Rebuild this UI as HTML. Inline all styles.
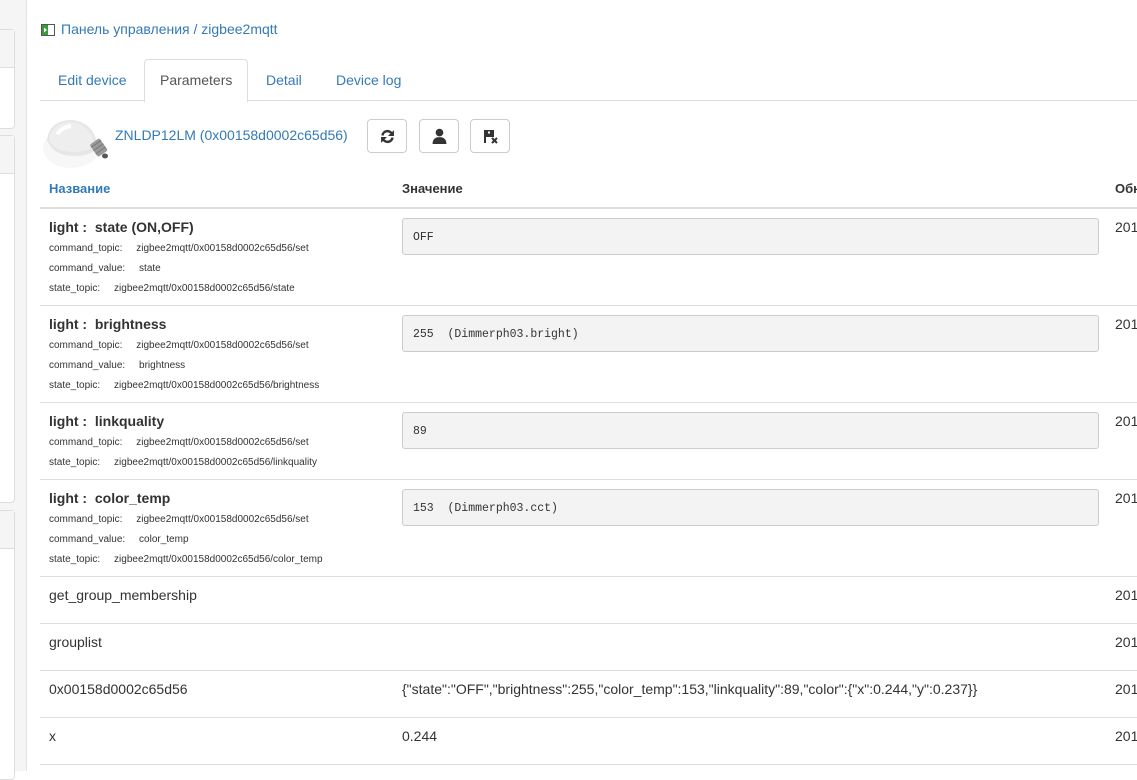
<!DOCTYPE html>
<html><head><meta charset="utf-8"><style>
*{box-sizing:border-box;margin:0;padding:0}
body{width:1137px;height:771px;overflow:hidden;background:#fff;font-family:"Liberation Sans",Arial,sans-serif;color:#333;position:relative;font-size:14px}
.a{position:absolute;white-space:nowrap}
.side{position:absolute;left:0;top:0;width:27px;height:771px;background:#f5f5f5;border-right:1px solid #e3e3e3}
.pan{position:absolute;left:-5px;width:20px;background:#fff;border:1px solid #ddd;border-radius:4px}
.ph{position:absolute;left:0;right:0;top:0;background:#f5f5f5;border-bottom:1px solid #ddd}
.hl{position:absolute;left:40px;right:0;height:1px;background:#ddd}
.inp{position:absolute;left:402px;width:697px;height:37px;background:#f3f3f3;border:1px solid #ccc;border-radius:3px;font-family:"Liberation Mono",monospace;font-size:11.5px;padding:12px 10px;white-space:pre;color:#333}
.t{font-weight:bold;font-size:14px;color:#333;left:49px}
.s{font-size:10px;color:#333;left:49px}
.y{left:1115px;font-size:14px}
.btn{position:absolute;top:119px;width:40px;height:34px;border:1px solid #ccc;border-radius:4px;background:#fff}
.tab{position:absolute;top:68px;font-size:14px;color:#337ab7}
</style></head><body>
<div class="side">
 <div class="pan" style="top:29px;height:100px"><div class="ph" style="height:38px"></div></div>
 <div class="pan" style="top:135px;height:368px"><div class="ph" style="height:38px"></div></div>
 <div class="pan" style="top:510px;height:270px"><div class="ph" style="height:38px"></div></div>
</div>
<svg class="a" style="left:41px;top:24px" width="14" height="12" viewBox="0 0 14 12"><rect x="0.5" y="0.5" width="13" height="11" fill="#fff" stroke="#555"/><rect x="1" y="1" width="6" height="10" fill="#3a9a3a"/><path d="M6 6L3 3.5V8.5Z" fill="#fff"/></svg>
<div class="a" style="left:61px;top:21px;font-size:14px;color:#337ab7">Панель управления / zigbee2mqtt</div>
<div class="hl" style="top:100px"></div>
<div class="a" style="left:144px;top:59px;width:104px;height:43px;background:#fff;border:1px solid #ddd;border-bottom:none;border-radius:4px 4px 0 0"></div>
<div class="tab" style="left:58px;top:72px">Edit device</div>
<div class="tab" style="left:160px;top:72px;color:#555">Parameters</div>
<div class="tab" style="left:266px;top:72px">Detail</div>
<div class="tab" style="left:336px;top:72px">Device log</div>
<svg class="a" style="left:41px;top:114px" width="70" height="58" viewBox="0 0 70 58"><ellipse cx="30" cy="34" rx="28" ry="20" fill="#f7f7f7"/><path d="M6 26 Q8 8 28 6 Q44 6 52 18 L58 32 Q50 42 34 42 Q12 42 6 26Z" fill="#e6e6e6"/><path d="M8 26 Q10 10 28 8 Q42 8 50 20 L54 32 Q46 38 32 38 Q14 38 8 26Z" fill="#eeeeee"/><path d="M16 20 Q22 13 30 12" stroke="#fff" stroke-width="4" fill="none"/><g transform="rotate(-35 58 34)"><rect x="52" y="26" width="12" height="15" rx="2" fill="#9a9a9a"/><path d="M52 29H64M52 33H64M52 37H64" stroke="#777" stroke-width="1"/></g><ellipse cx="64" cy="42" rx="3" ry="2.5" fill="#555"/></svg>
<div class="a" style="left:115px;top:127px;font-size:14px;color:#337ab7">ZNLDP12LM (0x00158d0002c65d56)</div>
<div class="btn" style="left:367px"><svg style="position:absolute;left:12px;top:9px" width="15" height="15" viewBox="0 0 14 14"><path d="M2.3 6A4.7 4.7 0 0 1 11 4.3M11.7 8A4.7 4.7 0 0 1 3 9.7" stroke="#333" stroke-width="2.3" fill="none"/><path d="M13 1V6.5H7.5Z M1 13V7.5H6.5Z" fill="#333"/></svg></div>
<div class="btn" style="left:419px"><svg style="position:absolute;left:12px;top:8px" width="15" height="16" viewBox="0 0 14 15"><circle cx="7" cy="4.3" r="3.6" fill="#333"/><path d="M0.5 15Q0.5 8.5 7 8.5Q13.5 8.5 13.5 15Z" fill="#333"/></svg></div>
<div class="btn" style="left:470px"><svg style="position:absolute;left:12px;top:9px" width="16" height="15" viewBox="0 0 16 15"><path d="M1 1H3V14H1Z M3 1H11V8H3Z" fill="#333"/><rect x="5" y="2.5" width="2" height="2" fill="#fff"/><path d="M9 9L14 14M14 9L9 14" stroke="#333" stroke-width="2"/></svg></div>
<div class="a" style="left:49px;top:181px;font-size:13px;font-weight:bold;color:#337ab7">Название</div>
<div class="a" style="left:402px;top:181px;font-size:13px;font-weight:bold">Значение</div>
<div class="a" style="left:1115px;top:181px;font-size:13px;font-weight:bold">Обн</div>
<div class="hl" style="top:207px;height:2px"></div>

<div class="a t" style="top:219px">light :&nbsp; state (ON,OFF)</div>
<div class="a s" style="top:243px">command_topic: &nbsp;&nbsp;&nbsp; zigbee2mqtt/0x00158d0002c65d56/set</div>
<div class="a s" style="top:263px">command_value: &nbsp;&nbsp;&nbsp; state</div>
<div class="a s" style="top:283px">state_topic: &nbsp;&nbsp;&nbsp; zigbee2mqtt/0x00158d0002c65d56/state</div>
<div class="inp" style="top:218px">OFF</div>
<div class="a y" style="top:219px">201</div>
<div class="hl" style="top:305px"></div>

<div class="a t" style="top:316px">light :&nbsp; brightness</div>
<div class="a s" style="top:340px">command_topic: &nbsp;&nbsp;&nbsp; zigbee2mqtt/0x00158d0002c65d56/set</div>
<div class="a s" style="top:360px">command_value: &nbsp;&nbsp;&nbsp; brightness</div>
<div class="a s" style="top:380px">state_topic: &nbsp;&nbsp;&nbsp; zigbee2mqtt/0x00158d0002c65d56/brightness</div>
<div class="inp" style="top:315px">255  (Dimmerph03.bright)</div>
<div class="a y" style="top:316px">201</div>
<div class="hl" style="top:402px"></div>

<div class="a t" style="top:413px">light :&nbsp; linkquality</div>
<div class="a s" style="top:437px">command_topic: &nbsp;&nbsp;&nbsp; zigbee2mqtt/0x00158d0002c65d56/set</div>
<div class="a s" style="top:457px">state_topic: &nbsp;&nbsp;&nbsp; zigbee2mqtt/0x00158d0002c65d56/linkquality</div>
<div class="inp" style="top:412px">89</div>
<div class="a y" style="top:413px">201</div>
<div class="hl" style="top:479px"></div>

<div class="a t" style="top:490px">light :&nbsp; color_temp</div>
<div class="a s" style="top:514px">command_topic: &nbsp;&nbsp;&nbsp; zigbee2mqtt/0x00158d0002c65d56/set</div>
<div class="a s" style="top:534px">command_value: &nbsp;&nbsp;&nbsp; color_temp</div>
<div class="a s" style="top:554px">state_topic: &nbsp;&nbsp;&nbsp; zigbee2mqtt/0x00158d0002c65d56/color_temp</div>
<div class="inp" style="top:489px">153  (Dimmerph03.cct)</div>
<div class="a y" style="top:490px">201</div>
<div class="hl" style="top:576px"></div>

<div class="a" style="left:49px;top:587px">get_group_membership</div>
<div class="a y" style="top:587px">201</div>
<div class="hl" style="top:623px"></div>
<div class="a" style="left:49px;top:634px">grouplist</div>
<div class="a y" style="top:634px">201</div>
<div class="hl" style="top:670px"></div>
<div class="a" style="left:49px;top:681px">0x00158d0002c65d56</div>
<div class="a" style="left:402px;top:681px">{"state":"OFF","brightness":255,"color_temp":153,"linkquality":89,"color":{"x":0.244,"y":0.237}}</div>
<div class="a y" style="top:681px">201</div>
<div class="hl" style="top:717px"></div>
<div class="a" style="left:49px;top:728px">x</div>
<div class="a" style="left:402px;top:728px">0.244</div>
<div class="a y" style="top:728px">201</div>
<div class="hl" style="top:764px"></div>
</body></html>
